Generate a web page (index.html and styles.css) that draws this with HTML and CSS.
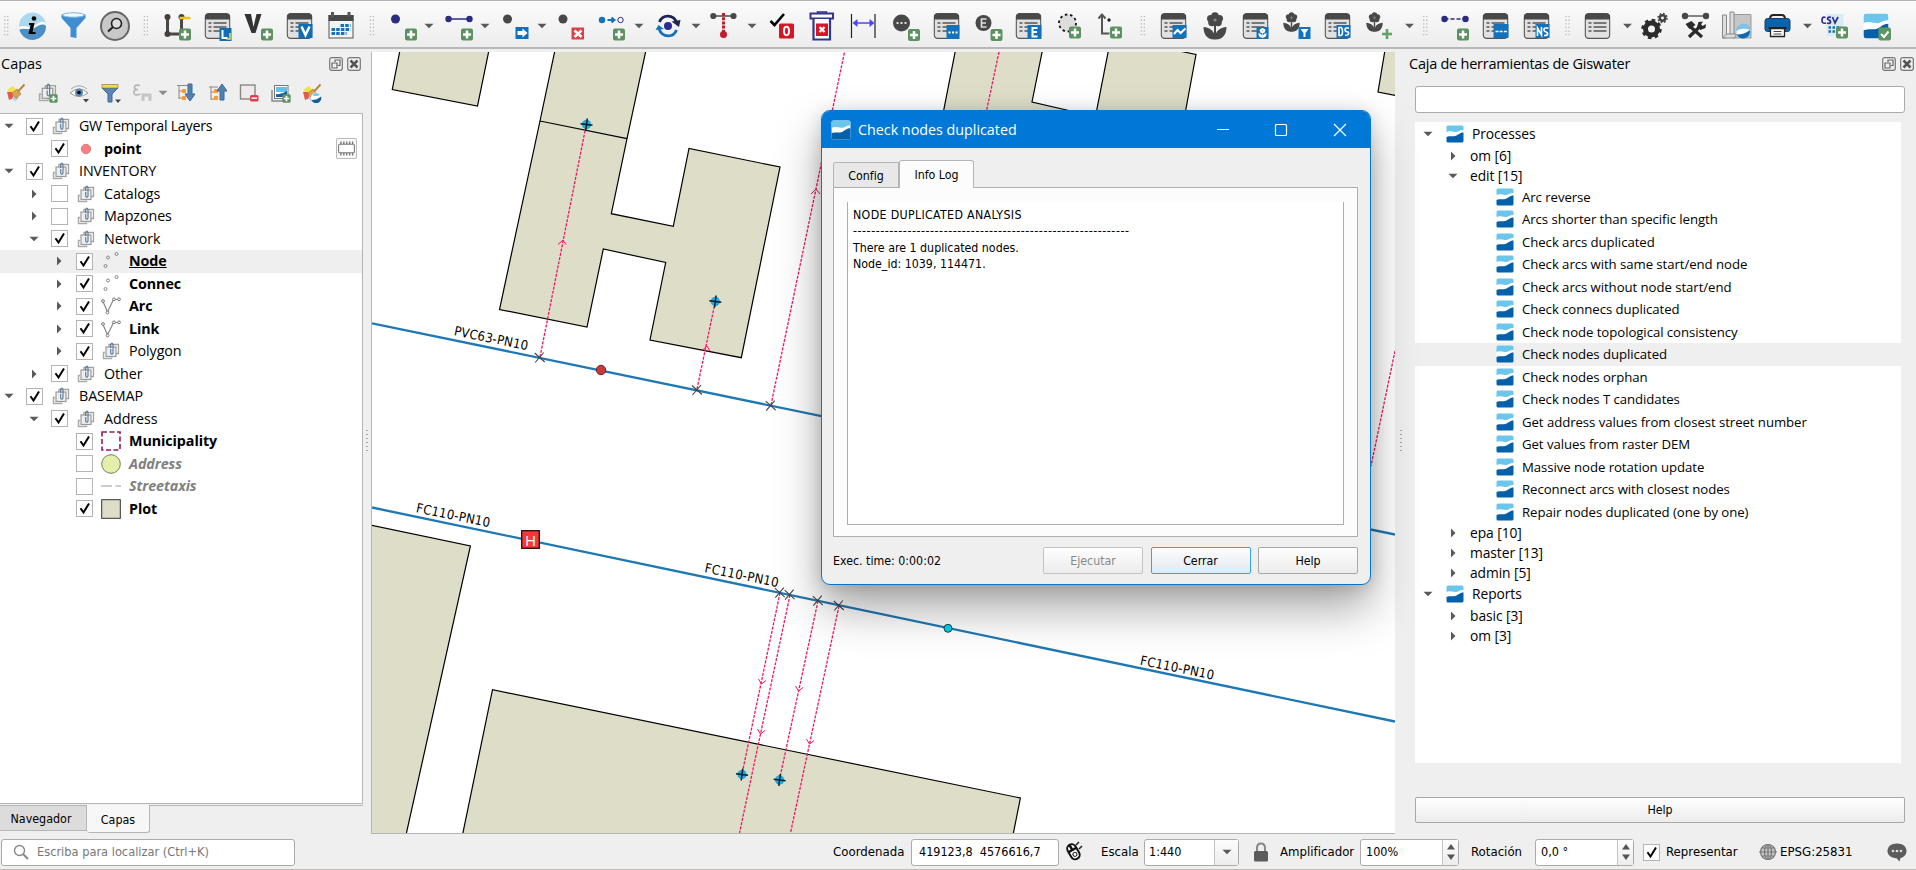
FILE: index.html
```html
<!DOCTYPE html>
<html lang="es">
<head>
<meta charset="utf-8">
<title>Giswater</title>
<link rel="stylesheet" href="styles.css">
</head>
<body>
<svg class="defs" aria-hidden="true">
  <defs>
    <symbol id="gw" viewBox="0 0 18 18"><rect x=".5" y=".5" width="17" height="17" rx="1.5" fill="#fff"/><path d="M.5 2Q.5.5 2 .5H16Q17.500.5 17.500 2V5C14 4.500 12 7.500 9 7 6 6.500 3 5.500.5 7Z" fill="#6cc5ea"/><path d="M.5 12C4 10.500 7 12 10.500 10.500 13 9.500 14 7.500 17.500 7.500V16Q17.500 17.500 16 17.500H2Q.5 17.500.5 16Z" fill="#0460a9"/></symbol>
    <symbol id="down" viewBox="0 0 10 10"><path d="M.5 2.700H9.500L5 7.300Z" fill="#5a5a5a"/></symbol>
    <symbol id="right" viewBox="0 0 10 10"><path d="M3 .5V9.500L7.500 5Z" fill="#5a5a5a"/></symbol>
    <symbol id="check" viewBox="0 0 17 17"><path d="M4.500 8.200 7.500 12.500 13 3.500" fill="none" stroke="#000" stroke-width="2"/></symbol>
    <symbol id="group" viewBox="0 0 18 18"><path d="M3 10.500H1.500V16.500H9.500V15.500" fill="none" stroke="#aaa" stroke-width="1.500"/><path d="M7 5V2.500H16.500V11.500H14" fill="none" stroke="#a2a2a0" stroke-width="1.300"/><rect x="4" y="5" width="10" height="9.500" fill="#eceff1" stroke="#9b9b96" stroke-width="1.200"/><path d="M8.700 6V2.500Q9.800-.5 11 2.500V11Q9.800 13.500 8.700 11V7" fill="none" stroke="#56769a" stroke-width="1.100"/></symbol>
    <symbol id="points" viewBox="0 0 18 18"><g fill="none" stroke="#888"><circle cx="3.500" cy="14" r="1.500"/><circle cx="6" cy="5.500" r="1.500"/><circle cx="14.500" cy="2" r="1.500"/></g></symbol>
    <symbol id="vline" viewBox="0 0 20 18"><path d="M2 4.500 6.500 15 12.500 2.500H18" fill="none" stroke="#888" stroke-width="1.200"/><g fill="#fff" stroke="#777"><circle cx="2" cy="4" r="1.400"/><circle cx="6.500" cy="15.500" r="1.400"/><circle cx="13" cy="2.300" r="1.400"/><circle cx="18" cy="2.300" r="1.400"/></g></symbol>
    <symbol id="plus" viewBox="0 0 13 13"><rect x=".5" y=".5" width="12" height="12" rx="2" fill="#5c9260"/><path d="M6.500 2.500V10.500M2.500 6.500H10.500" stroke="#fff" stroke-width="2.500"/></symbol>
    <symbol id="table" viewBox="0 0 26 26"><rect x=".7" y=".7" width="24.600" height="24.600" rx="3.500" fill="#e1e1e1" stroke="#555" stroke-width="1.300"/><path d="M.5 6.500V4Q.5.5 4 .5H22Q25.500.5 25.500 4V6.500Z" fill="#484848"/><path d="M4 10H7M9 10H22M4 14H7M9 14H22M4 18H7M9 18H22" stroke="#555" stroke-width="1.700"/></symbol>
    <symbol id="flower" viewBox="0 0 24 28"><circle cx="7.500" cy="6.500" r="3.500"/><circle cx="16.500" cy="6.500" r="3.500"/><circle cx="12" cy="4" r="3.800"/><circle cx="9" cy="10.500" r="3.800"/><circle cx="15" cy="10.500" r="3.800"/><circle cx="12" cy="8" r="5"/><circle cx="12" cy="8" r="1.600" fill="#888"/><path d="M11 13H13V27H11Z"/><path d="M12 27.500C4 28 .5 22 .5 15 7 15.500 11.300 19 12 25 12.700 19 17 15.500 23.500 15 23.500 22 20 28 12 27.500Z"/></symbol>
    <symbol id="float" viewBox="0 0 14 14"><rect x=".7" y=".7" width="12.600" height="12.600" rx="2" fill="none" stroke="#777" stroke-width="1.200"/><path d="M3 6H8V11H3ZM6 5V3H11V8.500H9" fill="none" stroke="#666" stroke-width="1.200"/></symbol>
    <symbol id="shut" viewBox="0 0 14 14"><rect x=".7" y=".7" width="12.600" height="12.600" rx="2" fill="none" stroke="#777" stroke-width="1.200"/><path d="M3.500 3.500 10.500 10.500M10.500 3.500 3.500 10.500" stroke="#555" stroke-width="2.500"/></symbol>
    <symbol id="grip" viewBox="0 0 6 22"><path d="M1.500 1V22M4.500 1V22" stroke="#b9b9b9" stroke-width="1.300" stroke-dasharray="1.300 2.300"/></symbol>
    <symbol id="cross" viewBox="-6 -6 12 12"><path d="M-5-4.500 5 4.500M-4.500 5 4-5" stroke="#444" stroke-width="1.100"/></symbol>
    <symbol id="connec" viewBox="-8 -8 16 16"><circle r="4.700" fill="#26a6db"/><path d="M-6-.8 6 .8M.8-6-.8 6" stroke="#06202c" stroke-width="1.500"/></symbol>
    <symbol id="brush" viewBox="0 0 20 20"><path d="M1 7 7 3 11 8 5 11Z" fill="#f7df4c"/><path d="M1 9 6 9 8 15 3 17Z" fill="#e8574c"/><path d="M6 15 9 12 13 15 9 18.500Z" fill="#bcd0e4"/><path d="M6 10 11 6 15 11 10 15.500Z" fill="#d6a458" stroke="#a8732f" stroke-width=".6"/><path d="M12 8.500 18.500 1.500" stroke="#c0843a" stroke-width="2"/></symbol>
  </defs>
</svg>

<header class="toolbar">
  <svg class="grip"><use href="#grip"/></svg>
  <svg class="tool" viewBox="0 0 32 32"><circle cx="16" cy="16" r="13.500" fill="#a9d8ef"/><path d="M2.600 17C8 14 12 19 17 16 22 13 25 10 29 13L29.500 19H3Z" fill="#fff"/><path d="M3 20C8 17 12 21 18 18 23 15 26 13 29.500 16A13.500 13.500 0 0 1 3 20Z" fill="#4d8fc2"/><circle cx="17.500" cy="8.500" r="2.300"/><path d="M12.500 13H18L16 22H19V24H12L14 15H12.500Z"/></svg>
  <svg class="tool" viewBox="0 0 32 32"><path d="M4 4.500Q16 1 28 4.500V8L19 18V28L13 27V18L4 8Z" fill="#3f8ed0"/><ellipse cx="16" cy="5" rx="11" ry="2.200" fill="#f4f8fb" stroke="#88b8dc"/></svg>
  <svg class="tool" viewBox="0 0 32 32"><circle cx="16.500" cy="16" r="14" fill="#c9c9c9" stroke="#666" stroke-width="2"/><circle cx="18" cy="13.500" r="5" fill="#ddd" stroke="#222" stroke-width="1.600"/><path d="M14.500 17 9.500 21.500" stroke="#222" stroke-width="2"/></svg>
  <svg class="grip grip--wide"><use href="#grip"/></svg>
  <svg class="tool" viewBox="0 0 32 32"><path d="M7 7V24H21V7" fill="none" stroke="#4b4744" stroke-width="3"/><g fill="#45413e"><circle cx="7" cy="7" r="3"/><circle cx="7" cy="24" r="3"/><circle cx="21" cy="7" r="3"/></g><path d="M19 8H30" stroke="#f1c40f" stroke-width="2.500"/><use href="#plus" x="18" y="18" width="13" height="13"/></svg>
  <svg class="tool" viewBox="0 0 32 32"><use href="#table" x="3" y="3" width="26" height="26"/><rect x="18" y="18" width="12" height="13" fill="#0f6db5"/><path d="M21 20V28H26" fill="none" stroke="#fff" stroke-width="2"/><path d="M28.500 23V29H25" fill="none" stroke="#f0df4a" stroke-width="1.500"/></svg>
  <svg class="tool" viewBox="0 0 32 32"><path d="M2 4H8.500L11 17 14 4H19L13 23H9Z" fill="#333"/><use href="#plus" x="18" y="18" width="13" height="13"/></svg>
  <svg class="tool" viewBox="0 0 32 32"><use href="#table" x="3" y="3" width="26" height="26"/><rect x="15" y="14" width="14" height="14" fill="#0f6db5"/><path d="M18 16.500 22 25 26 16.500" fill="none" stroke="#fff" stroke-width="2.500"/></svg>
  <svg class="tool" viewBox="0 0 32 32"><rect x="4.500" y="5.500" width="24" height="22.500" fill="#f4f4f4" stroke="#555"/><path d="M4 5H29V11H4Z" fill="#484848"/><path d="M8 2V7M24.500 2V7" stroke="#555" stroke-width="3"/><path d="M16 15.500H26M7 19.500H26M7 23.500H22" stroke="#1472ba" stroke-width="3.200" stroke-dasharray="3.500 1.200"/></svg>
  <svg class="grip grip--wide"><use href="#grip"/></svg>
  <svg class="tool" viewBox="0 0 32 32"><circle cx="8" cy="9" r="4.500" fill="#2b2b80"/><use href="#plus" x="17" y="18" width="13" height="13"/></svg><svg class="caret"><use href="#down"/></svg>
  <svg class="tool" viewBox="0 0 32 32"><path d="M5 9H26" stroke="#2b2b80" stroke-width="1.500"/><circle cx="5" cy="9" r="3.200" fill="#2b2b80"/><circle cx="26" cy="9" r="3.200" fill="#2b2b80"/><use href="#plus" x="17" y="18" width="13" height="13"/></svg><svg class="caret"><use href="#down"/></svg>
  <svg class="tool" viewBox="0 0 32 32"><circle cx="7" cy="9" r="4.500" fill="#484848"/><rect x="15" y="17" width="13" height="12" fill="#146fb9"/><path d="M17 21H22V18.500L27 23 22 27.500V25H17Z" fill="#fff"/></svg><svg class="caret"><use href="#down"/></svg>
  <svg class="tool" viewBox="0 0 32 32"><circle cx="6.500" cy="9" r="4.500" fill="#484848"/><rect x="15" y="17.500" width="12.500" height="12" fill="#dc4046"/><path d="M18 20.500 25 27M25 20.500 18 27" stroke="#fff" stroke-width="2.500"/></svg>
  <svg class="tool" viewBox="0 0 32 32"><circle cx="4.500" cy="10" r="3.200" fill="#1472ba"/><path d="M10 10H16M14 7.500 17 10 14 12.500" fill="none" stroke="#1472ba" stroke-width="2"/><circle cx="23" cy="10" r="2.700" fill="#fff" stroke="#2b2b80"/><use href="#plus" x="15" y="18" width="13" height="13"/></svg><svg class="caret"><use href="#down"/></svg>
  <svg class="tool" viewBox="0 0 32 32"><g fill="none" stroke-width="2.800"><path d="M5 12C8 4 19 4 22.500 13" stroke="#1f2450"/><path d="M4.500 19C8 28 19 28 22 20" stroke="#1472ba"/></g><path d="M17 11.500 26 10 24.500 17Z" fill="#1f2450"/><path d="M1 20 4 15 9.500 19Z" fill="#1472ba"/><circle cx="13.500" cy="16" r="4" fill="#2b2b90"/></svg><svg class="caret"><use href="#down"/></svg>
  <svg class="tool" viewBox="0 0 32 32"><path d="M2 6H24" stroke="#484848" stroke-width="1.500"/><circle cx="2.800" cy="6" r="3.100" fill="#484848"/><circle cx="23" cy="6" r="3.100" fill="#484848"/><path d="M13 3V23" stroke="#c41a2d" stroke-width="3" stroke-dasharray="3 1.200"/><circle cx="13" cy="24.500" r="3.500" fill="#c41a2d"/></svg><svg class="caret"><use href="#down"/></svg>
  <svg class="tool" viewBox="0 0 32 32"><path d="M3 11 7 15 16.500 4" fill="none" stroke="#000" stroke-width="2.600"/><rect x="11.500" y="13.500" width="15" height="15" rx="1.500" fill="#d71524"/><ellipse cx="19" cy="21" rx="2.500" ry="4.200" fill="none" stroke="#fff" stroke-width="2"/></svg>
  <svg class="tool" viewBox="0 0 32 32"><path d="M9 3.500V2H18V3.500" fill="none" stroke="#2b2b80" stroke-width="1.500"/><path d="M2 3.500H24.500V8.500H2Z" fill="#fff" stroke="#35358f" stroke-width="2"/><path d="M5 9V29.500H21.500V9" fill="#fff" stroke="#35358f" stroke-width="2.200"/><rect x="7.500" y="13.500" width="12" height="12.500" fill="#d71524"/><path d="M11 17 16 22M16 17 11 22" stroke="#fff" stroke-width="2.200"/></svg>
  <svg class="tool" viewBox="0 0 32 32"><path d="M2 4V28M25.500 4V28" stroke="#222" stroke-width="1.200"/><path d="M5 13H23" stroke="#4747ff" stroke-width="1.500"/><path d="M3 13 8 9V17ZM25 13 20 9V17Z" fill="#4747ff"/></svg>
  <svg class="tool" viewBox="0 0 32 32"><circle cx="11" cy="13" r="8.500" fill="#484848"/><path d="M6 13H16.500" stroke="#ddd" stroke-width="2" stroke-dasharray="2 2"/><use href="#plus" x="17" y="18.500" width="13" height="13"/></svg>
  <svg class="tool" viewBox="0 0 32 32"><use href="#table" x="2" y="3" width="26" height="26"/><rect x="15" y="15" width="13" height="14" fill="#1472ba"/><path d="M17 22.500H27" stroke="#fff" stroke-width="2" stroke-dasharray="2 1.500"/></svg>
  <svg class="tool" viewBox="0 0 32 32"><circle cx="11" cy="13" r="8" fill="#484848"/><path d="M14 9H9V17H14M9 13H13.500" fill="none" stroke="#ddd" stroke-width="1.700"/><use href="#plus" x="17.500" y="18.500" width="13" height="13"/></svg>
  <svg class="tool" viewBox="0 0 32 32"><use href="#table" x="2" y="3" width="26" height="26"/><rect x="14" y="15" width="14" height="14" fill="#1472ba"/><path d="M24 18H19V26.500H24M19 22H23.500" fill="none" stroke="#fff" stroke-width="2"/></svg>
  <svg class="tool" viewBox="0 0 32 32"><circle cx="13" cy="13" r="8.500" fill="#ddd" stroke="#111" stroke-width="1.800" stroke-dasharray="2.500 2.800"/><use href="#plus" x="14" y="16" width="13" height="13"/></svg>
  <svg class="tool" viewBox="0 0 32 32"><path d="M6.500 5V23.500H14M3 8.500 6.500 4.500 10 8.500" fill="none" stroke="#555" stroke-width="2"/><circle cx="13.500" cy="10" r="1.700" fill="#222"/><use href="#plus" x="14" y="16" width="13" height="13"/></svg>
  <svg class="grip grip--tight"><use href="#grip"/></svg>
  <svg class="tool" viewBox="0 0 32 32"><use href="#table" x="2" y="3" width="26" height="26"/><rect x="14" y="15" width="14" height="13" fill="#1472ba"/><path d="M15.500 24 19 20 22 23 27 18.500" fill="none" stroke="#fff" stroke-width="2"/></svg>
  <svg class="tool" viewBox="0 0 32 32" fill="#484848"><use href="#flower" x="3" y="2" width="25" height="28"/></svg>
  <svg class="tool" viewBox="0 0 32 32"><use href="#table" x="2" y="3" width="26" height="26"/><rect x="16" y="17" width="12" height="12" fill="#1472ba"/><use href="#flower" x="17" y="18" width="10" height="10" fill="#fff"/></svg>
  <svg class="tool" viewBox="0 0 32 32" fill="#484848"><use href="#flower" x="0" y="2" width="20" height="20"/><rect x="17" y="17" width="12" height="12" fill="#1472ba"/><path d="M19 19H27L24 23V27H22V23Z" fill="#fff"/></svg>
  <svg class="tool" viewBox="0 0 32 32"><use href="#table" x="2" y="3" width="26" height="26"/><rect x="14" y="15" width="14" height="13" fill="#1472ba"/><path d="M16.500 17.500V25.500H18Q20 25.500 20 21.500 20 17.500 18 17.500ZM26.500 18H23.500Q22.500 18 22.500 20 22.500 21.500 24.500 21.700 26.500 22 26 24 25.800 25.300 22.500 25.300" fill="none" stroke="#fff" stroke-width="1.600"/></svg>
  <svg class="tool" viewBox="0 0 32 32" fill="#484848"><use href="#flower" x="1" y="2" width="20" height="20"/><path d="M23.500 19V29M18.500 24H28.500" stroke="#5fa367" stroke-width="2.600"/></svg><svg class="caret caret--wide"><use href="#down"/></svg>
  <svg class="grip grip--short"><use href="#grip"/></svg>
  <svg class="tool" viewBox="0 0 32 32"><path d="M5 9H26" stroke="#2b2b80" stroke-width="1.500" stroke-dasharray="4 2"/><circle cx="5" cy="9" r="3.200" fill="#2b2b80"/><circle cx="26" cy="9" r="3.200" fill="#2b2b80"/><use href="#plus" x="17" y="18" width="13" height="13"/></svg>
  <svg class="tool" viewBox="0 0 32 32"><use href="#table" x="2" y="3" width="26" height="26"/><rect x="13" y="14" width="15" height="14" fill="#1472ba"/><path d="M15 21.500H27" stroke="#fff" stroke-width="1.500" stroke-dasharray="3 1.200"/></svg>
  <svg class="tool" viewBox="0 0 32 32"><use href="#table" x="2" y="3" width="26" height="26"/><rect x="14" y="14" width="14" height="14" fill="#1472ba"/><path d="M16 26V18L20 25V17M27 18H24Q22.500 18 22.500 20 22.500 21.500 24.500 22 26.500 22.500 26 24.500 25.800 25.500 22.500 25.500" fill="none" stroke="#fff" stroke-width="1.600"/></svg>
  <svg class="grip grip--mid"><use href="#grip"/></svg>
  <svg class="tool" viewBox="0 0 32 32"><use href="#table" x="3" y="3" width="26" height="26"/></svg><svg class="caret caret--wide"><use href="#down"/></svg>
  <svg class="tool" viewBox="0 0 32 32"><circle cx="13" cy="19" r="6" fill="none" stroke="#2c2c2c" stroke-width="5"/><circle cx="13" cy="19" r="9" fill="none" stroke="#2c2c2c" stroke-width="2.500" stroke-dasharray="3.500 3.560"/><circle cx="24" cy="8" r="2.700" fill="none" stroke="#444" stroke-width="2.500"/><circle cx="24" cy="8" r="4.500" fill="none" stroke="#444" stroke-width="1.500" stroke-dasharray="1.700 1.830"/></svg>
  <svg class="tool" viewBox="0 0 32 32"><path d="M5 6H27" stroke="#484848" stroke-width="1.300"/><circle cx="5.500" cy="6" r="3.200" fill="#484848"/><circle cx="26.500" cy="6" r="3.200" fill="#484848"/><path d="M9 15 22.500 27M22 15 9.500 27" stroke="#2a2a2a" stroke-width="3.200"/><path d="M6 14 12 11 16 15 10 19Z" fill="#2a2a2a"/><path d="M19 12 17.500 17 21 20 26 18 26.500 14 23 16 21.500 14.500 23.500 11.500Z" fill="#2a2a2a"/></svg>
  <svg class="tool" viewBox="0 0 32 32"><path d="M12 4.500H30.500V28H12Z" fill="#c6c6c6" stroke="#999"/><path d="M2 5H6V28H2ZM9.500 2H13.500V25H9.500Z" fill="#ddd" stroke="#888"/><path d="M2 28H14L16 24H6Z" fill="#ddd" stroke="#888"/><circle cx="23" cy="21" r="7.500" fill="#7fc2e8"/><path d="M16 21Q21 17 30 20 27 25 16 24Z" fill="#fff"/><path d="M16.500 25Q25 24 29.500 20 30 27 23 28.500 19 28.500 16.500 25Z" fill="#1467ac"/></svg>
  <svg class="tool" viewBox="0 0 32 32"><path d="M8.500 9Q8.500 5 12 5H20Q23.500 5 23.500 9" fill="#eee" stroke="#222" stroke-width="2"/><rect x="3.500" y="8.500" width="25" height="13" rx="2.500" fill="#0b63ac" stroke="#154069"/><path d="M9 18.500H23V26.500H9Z" fill="#fff" stroke="#222" stroke-width="1.300"/><path d="M7 18H25" stroke="#222" stroke-width="2"/><path d="M12 21.500H20M12 24H20" stroke="#444"/></svg><svg class="caret caret--wide"><use href="#down"/></svg>
  <svg class="tool" viewBox="0 0 32 32"><rect x="7" y="4" width="17" height="22" fill="#d9ebf5"/><path d="M6 7.500Q2.500 6 2.500 10.500 2.500 14 6.500 13M11.500 7.500Q8 6.500 8 9 11.500 10.500 11 12.500 10 14 7.500 13M13 7 15.500 13 18.500 7" fill="none" stroke="#2b2b90" stroke-width="1.700"/><path d="M9 17.500H20M9 21.500H17" stroke="#1472ba" stroke-width="2.500" stroke-dasharray="2.500 1.500"/><use href="#plus" x="16" y="16" width="13" height="13"/></svg>
  <svg class="tool" viewBox="0 0 32 32"><use href="#gw" x="2.500" y="3" width="26" height="26"/><rect x="18" y="17.500" width="12.500" height="13" rx="2" fill="#5d9660"/><path d="M20.500 24 23.500 27 28 21.500" fill="none" stroke="#fff" stroke-width="2"/></svg>
</header>

<main class="workspace">
  <aside class="layers">
    <div class="dock-title"><span class="t-capas">Capas</span><svg><use href="#float"/></svg><svg><use href="#shut"/></svg></div>
    <div class="layer-tools">
      <svg viewBox="0 0 20 20"><use href="#brush"/></svg>
      <svg viewBox="0 0 20 20"><use href="#group" width="19" height="19"/><use href="#plus" x="11" y="11" width="9" height="9"/></svg>
      <svg viewBox="0 0 20 20"><path d="M1 10Q10 2 19 10 10 17 1 10Z" fill="#fff" stroke="#999"/><circle cx="10" cy="9.500" r="4" fill="#5c88b4"/><circle cx="10" cy="9.500" r="1.800"/><path d="M2 6Q10-.5 18 6" fill="none" stroke="#aaa"/><path d="M14 16H20L17 19.500Z" fill="#444"/></svg>
      <svg viewBox="0 0 20 20"><path d="M1 5H17L11 11V19H7V11Z" fill="#5a85b4" stroke="#3d6796"/><rect x="1" y="1.500" width="16" height="3.500" fill="#f5da45" stroke="#8b8145" stroke-width=".7"/><path d="M14 16.500H20L17 20Z" fill="#444"/></svg>
      <svg viewBox="0 0 20 20"><path d="M8 2.500Q2 1 2.500 5 3 6.500 6 6.500 1 7 2 10.500 3 13 8.500 11" fill="none" stroke="#b5b5b5" stroke-width="1.700"/><path d="M11 18V12H18V18" fill="none" stroke="#c5c5c5" stroke-width="3"/></svg>
      <svg class="mini"><use href="#down" opacity=".65"/></svg>
      <svg viewBox="0 0 20 20"><path d="M1 2.500H12M3 2.500V16M3 8H7M3 15H7" fill="none" stroke="#888"/><rect x="6" y="6" width="4" height="4" fill="#ff9b2c"/><rect x="6" y="13" width="4" height="4" fill="#ff9b2c"/><path d="M12 1H16V11H19L14 18 9 11H12Z" fill="#5083b4" stroke="#3b6795"/></svg>
      <svg viewBox="0 0 20 20"><path d="M1 4H10M3 4V17M3 9H7M3 16H7" fill="none" stroke="#888"/><rect x="6" y="6" width="4" height="4" fill="#ff9b2c"/><rect x="6" y="13" width="4" height="4" fill="#ff9b2c"/><path d="M12 17H16V8H19L14 1 9 8H12Z" fill="#5083b4" stroke="#3b6795"/></svg>
      <svg viewBox="0 0 20 20"><rect x="1.500" y="2" width="14.500" height="14" fill="#ececec" stroke="#8a8a84" stroke-width="1.400"/><rect x="11" y="12" width="8.500" height="6.500" rx="1.500" fill="#e43f49"/><path d="M12.500 15.200H18" stroke="#fff" stroke-width="1.500"/></svg>
      <svg viewBox="0 0 20 20"><path d="M1 7V18H13" fill="none" stroke="#888" stroke-width="1.400"/><rect x="3.500" y="2.500" width="13.500" height="13" fill="#fff" stroke="#777"/><rect x="5" y="4" width="11" height="5" fill="#68c0e8"/><path d="M5 11Q10 12 16 8V14H5Z" fill="#155f9f"/><use href="#plus" x="11" y="11" width="9" height="9"/></svg>
      <svg viewBox="0 0 20 20"><use href="#brush"/><circle cx="14" cy="14.500" r="5" fill="#fff"/><path d="M9.500 17Q15 17 19 13.500A5 5 0 0 1 9.500 17Z" fill="#14609f"/><path d="M10 12A5 5 0 0 1 18 12Q14 14 10 12Z" fill="#7cc4e8"/></svg>
    </div>
    <div class="tree layer-tree">
      <div class="row l0"><svg class="arr"><use href="#down"/></svg><i class="box"><svg><use href="#check"/></svg></i><svg class="ico"><use href="#group"/></svg><span class="t-gw">GW Temporal Layers</span></div>
      <div class="row l1"><i class="arr"></i><i class="box"><svg><use href="#check"/></svg></i><svg class="ico" viewBox="0 0 18 18"><circle cx="9" cy="9" r="4.700" fill="#ff7f7f" stroke="#c47070" stroke-width=".8"/></svg><b>point</b><svg class="memory" viewBox="0 0 20 20"><rect x=".5" y=".5" width="19" height="19" rx="1.500" fill="#fafafa" stroke="#bbb"/><rect x="2.500" y="6" width="15" height="8" rx="1" fill="#fff" stroke="#777"/><path d="M4 4.500H17M4 15.500H17" stroke="#777" stroke-width="2.500" stroke-dasharray="1.300 1.500"/></svg></div>
      <div class="row l0"><svg class="arr"><use href="#down"/></svg><i class="box"><svg><use href="#check"/></svg></i><svg class="ico"><use href="#group"/></svg><span>INVENTORY</span></div>
      <div class="row l1"><svg class="arr"><use href="#right"/></svg><i class="box"></i><svg class="ico"><use href="#group"/></svg><span>Catalogs</span></div>
      <div class="row l1"><svg class="arr"><use href="#right"/></svg><i class="box"></i><svg class="ico"><use href="#group"/></svg><span>Mapzones</span></div>
      <div class="row l1"><svg class="arr"><use href="#down"/></svg><i class="box"><svg><use href="#check"/></svg></i><svg class="ico"><use href="#group"/></svg><span>Network</span></div>
      <div class="row l2 current"><svg class="arr"><use href="#right"/></svg><i class="box"><svg><use href="#check"/></svg></i><svg class="ico"><use href="#points"/></svg><b><u>Node</u></b></div>
      <div class="row l2"><svg class="arr"><use href="#right"/></svg><i class="box"><svg><use href="#check"/></svg></i><svg class="ico"><use href="#points"/></svg><b>Connec</b></div>
      <div class="row l2"><svg class="arr"><use href="#right"/></svg><i class="box"><svg><use href="#check"/></svg></i><svg class="ico big"><use href="#vline"/></svg><b>Arc</b></div>
      <div class="row l2"><svg class="arr"><use href="#right"/></svg><i class="box"><svg><use href="#check"/></svg></i><svg class="ico big"><use href="#vline"/></svg><b>Link</b></div>
      <div class="row l2"><svg class="arr"><use href="#right"/></svg><i class="box"><svg><use href="#check"/></svg></i><svg class="ico"><use href="#group"/></svg><span>Polygon</span></div>
      <div class="row l1"><svg class="arr"><use href="#right"/></svg><i class="box"><svg><use href="#check"/></svg></i><svg class="ico"><use href="#group"/></svg><span>Other</span></div>
      <div class="row l0"><svg class="arr"><use href="#down"/></svg><i class="box"><svg><use href="#check"/></svg></i><svg class="ico"><use href="#group"/></svg><span>BASEMAP</span></div>
      <div class="row l1"><svg class="arr"><use href="#down"/></svg><i class="box"><svg><use href="#check"/></svg></i><svg class="ico"><use href="#group"/></svg><span>Address</span></div>
      <div class="row l2"><i class="arr"></i><i class="box"><svg><use href="#check"/></svg></i><svg class="ico big" viewBox="0 0 20 20"><rect x="1" y="1" width="18" height="18" fill="none" stroke="#8e1a5e" stroke-width="1.600" stroke-dasharray="5 2.500"/></svg><b>Municipality</b></div>
      <div class="row l2 off"><i class="arr"></i><i class="box"></i><svg class="ico big" viewBox="0 0 20 20"><circle cx="10" cy="10" r="9.300" fill="#e5eeab" stroke="#777b60"/></svg><b>Address</b></div>
      <div class="row l2 off"><i class="arr"></i><i class="box"></i><svg class="ico big" viewBox="0 0 20 20"><path d="M0 10H20" stroke="#ccc" stroke-width="2" stroke-dasharray="11 3.500"/></svg><b>Streetaxis</b></div>
      <div class="row l2"><i class="arr"></i><i class="box"><svg><use href="#check"/></svg></i><svg class="ico big" viewBox="0 0 20 20"><rect x=".7" y=".7" width="18.600" height="18.600" fill="#dedec8" stroke="#333"/></svg><b>Plot</b></div>
    </div>
    <div class="dock-tabs"><span class="dock-tab">Navegador</span><span class="dock-tab dock-tab--on">Capas</span></div>
  </aside>
  <div class="splitter"><i></i></div>

  <section class="map">
    <svg class="canvas" viewBox="372 52 1023 781">
      <g class="plot">
        <path d="M400 50 392.300 89.500 477.500 106 489 50"/>
        <path d="M555 50 540 121 499.500 309.500 587 327 603.300 249 665.700 262.500 650 340 741.300 357.700 780 167 689 148.500 673.300 226.300 611.300 213.700 627 138.700 646 50M540 121 627 138.700"/>
        <path d="M955.500 50 943 114H1084L1032 102 1042.500 50"/>
        <path d="M1108.500 50 1096 114H1185L1196 54.500 1170 49"/>
        <path d="M1385 50 1378 92 1400 96.500V50"/>
        <path d="M370 525 470.400 546 406 835H370Z"/>
        <path d="M462.500 835 492.500 689.700 1020.400 798 1013 835"/>
      </g>
      <g class="pipe"><path d="M372 323.300 1395 534.500"/><path d="M372 507.500 1395 721.500"/></g>
      <g class="link"><path d="M540 357 586 126"/><path d="M697 389 715 303"/><path d="M771 405 844.500 52"/><path d="M999 52 985 118"/><path d="M1395 351 1371 466"/><path d="M780 593 742 774"/><path d="M790 595 739.500 833"/><path d="M818 601 779.600 779"/><path d="M839 606 790.500 833"/></g>
      <g class="tick"><path d="M558 244.500 563 240 566 244.500"/><path d="M702 350.500 707 346 710 351"/><path d="M811 194 816 189 820 194"/><path d="M758.500 679 761.500 684 766 680.500"/><path d="M757.500 729 760.500 734 765 730.500"/><path d="M795.500 686 798.500 691 803 687.500"/><path d="M806.500 739 809.500 744 814 740.500"/></g>
      <use href="#cross" x="533.700" y="351.500" width="12" height="12"/><use href="#cross" x="691" y="384" width="12" height="12"/><use href="#cross" x="764.700" y="399.700" width="12" height="12"/><use href="#cross" x="773.800" y="586.700" width="12" height="12"/><use href="#cross" x="783.600" y="588.700" width="12" height="12"/><use href="#cross" x="811.800" y="594.700" width="12" height="12"/><use href="#cross" x="832.800" y="599.500" width="12" height="12"/>
      <use href="#connec" x="578.500" y="116.500" width="16" height="16"/><use href="#connec" x="707.300" y="293.500" width="16" height="16"/><use href="#connec" x="734" y="766.500" width="16" height="16"/><use href="#connec" x="771.600" y="772" width="16" height="16"/>
      <circle cx="601" cy="370" r="4.700" fill="#c63a3a" stroke="#6e1f24"/>
      <circle cx="948" cy="628.300" r="4" fill="#00d4ee" stroke="#1c4650"/>
      <rect x="521.700" y="530.700" width="17.600" height="17.600" fill="#fb353a" stroke="#2a0d0d" stroke-width="1.300"/>
      <text class="hydrant" x="530.500" y="546" text-anchor="middle">H</text>
      <g class="label"><text transform="translate(453.500 335) rotate(11.700)" textLength="75">PVC63-PN10</text><text transform="translate(415.500 512) rotate(11.700)" textLength="75">FC110-PN10</text><text transform="translate(704 572) rotate(11.700)" textLength="75">FC110-PN10</text><text transform="translate(1139.500 664.500) rotate(11.700)" textLength="75">FC110-PN10</text></g>
    </svg>

    <div class="dialog">
      <div class="titlebar"><svg class="logo"><use href="#gw"/></svg><span>Check nodes duplicated</span>
        <svg class="winbtns" viewBox="0 0 130 14"><g fill="none" stroke="#fff" stroke-width="1.200"><path d="M0 6.500H12"/><rect x="58.500" y="1.500" width="11" height="11" rx="1"/><path d="M117 1 129 13M129 1 117 13"/></g></svg></div>
      <div class="tabs"><span class="tab">Config</span><span class="tab tab--on">Info Log</span></div>
      <div class="pane"><div class="log"><p class="t-head">NODE DUPLICATED ANALYSIS</p><p class="t-dash">-------------------------------------------------------------</p><p>There are 1 duplicated nodes.</p><p>Node_id: 1039, 114471.</p></div></div>
      <div class="footer"><span class="exec">Exec. time: 0:00:02</span><span class="btn btn--off">Ejecutar</span><span class="btn btn--focus">Cerrar</span><span class="btn">Help</span></div>
    </div>
  </section>
  <div class="splitter splitter--right"><i></i></div>

  <aside class="toolbox">
    <div class="dock-title"><span class="t-caja">Caja de herramientas de Giswater</span><svg><use href="#float"/></svg><svg><use href="#shut"/></svg></div>
    <div class="field filter"></div>
    <div class="tree tool-tree">
      <div class="row top"><svg class="arr"><use href="#down"/></svg><svg class="gw"><use href="#gw"/></svg><span>Processes</span></div>
      <div class="row cat"><svg class="arr"><use href="#right"/></svg><span>om [6]</span></div>
      <div class="row cat"><svg class="arr"><use href="#down"/></svg><span>edit [15]</span></div>
      <div class="row item"><svg class="gw"><use href="#gw"/></svg><span>Arc reverse</span></div>
      <div class="row item"><svg class="gw"><use href="#gw"/></svg><span>Arcs shorter than specific length</span></div>
      <div class="row item"><svg class="gw"><use href="#gw"/></svg><span>Check arcs duplicated</span></div>
      <div class="row item"><svg class="gw"><use href="#gw"/></svg><span>Check arcs with same start/end node</span></div>
      <div class="row item"><svg class="gw"><use href="#gw"/></svg><span>Check arcs without node start/end</span></div>
      <div class="row item"><svg class="gw"><use href="#gw"/></svg><span>Check connecs duplicated</span></div>
      <div class="row item"><svg class="gw"><use href="#gw"/></svg><span>Check node topological consistency</span></div>
      <div class="row item current"><svg class="gw"><use href="#gw"/></svg><span>Check nodes duplicated</span></div>
      <div class="row item"><svg class="gw"><use href="#gw"/></svg><span>Check nodes orphan</span></div>
      <div class="row item"><svg class="gw"><use href="#gw"/></svg><span>Check nodes T candidates</span></div>
      <div class="row item"><svg class="gw"><use href="#gw"/></svg><span>Get address values from closest street number</span></div>
      <div class="row item"><svg class="gw"><use href="#gw"/></svg><span>Get values from raster DEM</span></div>
      <div class="row item"><svg class="gw"><use href="#gw"/></svg><span>Massive node rotation update</span></div>
      <div class="row item"><svg class="gw"><use href="#gw"/></svg><span>Reconnect arcs with closest nodes</span></div>
      <div class="row item"><svg class="gw"><use href="#gw"/></svg><span>Repair nodes duplicated (one by one)</span></div>
      <div class="row cat"><svg class="arr"><use href="#right"/></svg><span>epa [10]</span></div>
      <div class="row cat"><svg class="arr"><use href="#right"/></svg><span>master [13]</span></div>
      <div class="row cat"><svg class="arr"><use href="#right"/></svg><span>admin [5]</span></div>
      <div class="row top"><svg class="arr"><use href="#down"/></svg><svg class="gw"><use href="#gw"/></svg><span>Reports</span></div>
      <div class="row cat"><svg class="arr"><use href="#right"/></svg><span>basic [3]</span></div>
      <div class="row cat"><svg class="arr"><use href="#right"/></svg><span>om [3]</span></div>
    </div>
    <span class="btn help">Help</span>
  </aside>
</main>

<footer class="status">
  <div class="field locator"><svg viewBox="0 0 16 16"><circle cx="6.500" cy="6.500" r="5" fill="none" stroke="#888" stroke-width="1.400"/><path d="M10 10 15 15" stroke="#888" stroke-width="2"/></svg><span>Escriba para localizar (Ctrl+K)</span></div>
  <span class="s-coord">Coordenada</span><div class="field f-coord">419123,8&nbsp; 4576616,7</div>
  <svg class="mouse" viewBox="0 0 20 22"><g transform="rotate(-30 9 11)"><rect x="5" y="3" width="9" height="16" rx="4.500" fill="#fff" stroke="#111" stroke-width="2"/><path d="M5 9H14M9.500 3V9" stroke="#111" stroke-width="2.500"/><circle cx="9.500" cy="14" r="2" fill="none" stroke="#222"/></g><path d="M12 4 15 1M15 8 18 5" stroke="#222" stroke-width="1.500"/></svg>
  <span class="s-scale">Escala</span><div class="field f-scale"><span>1:440</span><i><svg><use href="#down"/></svg></i></div>
  <svg class="lock" viewBox="0 0 16 20"><path d="M4 10V6Q4 1.500 8 1.500T12 6V10" fill="none" stroke="#888" stroke-width="2"/><rect x="1" y="9" width="14" height="10.500" rx="1.500" fill="#5b5b5b"/></svg>
  <span class="s-mag">Amplificador</span><div class="field f-spin"><span>100%</span><i><svg viewBox="0 0 10 18"><path d="M1 6.500 5 1 9 6.500ZM1 11.500 5 17 9 11.500Z" fill="#555"/></svg></i></div>
  <span class="s-rot">Rotación</span><div class="field f-spin"><span>0,0 °</span><i><svg viewBox="0 0 10 18"><path d="M1 6.500 5 1 9 6.500ZM1 11.500 5 17 9 11.500Z" fill="#555"/></svg></i></div>
  <i class="box s-box"><svg><use href="#check"/></svg></i><span class="s-rep">Representar</span>
  <svg class="globe" viewBox="0 0 20 18"><g fill="none" stroke="#777" stroke-width="1.200"><circle cx="10" cy="9" r="7.500" fill="#c4c4c4"/><ellipse cx="10" cy="9" rx="3.500" ry="7.500"/><path d="M10 1V17M1 9H19M3.500 5H16.500M3.500 13H16.500"/></g></svg>
  <span class="s-epsg">EPSG:25831</span>
  <svg class="bubble" viewBox="0 0 20 20"><path d="M10 1.500C16 1.500 19.500 4.500 19.500 9 19.500 13 16.500 15.500 13.500 16L12.500 19.500 9.500 16.200C4 16 .5 13 .5 9 .5 4.500 4 1.500 10 1.500Z" fill="#5c5c5c"/><g fill="#ddd"><circle cx="6" cy="9" r="1.300"/><circle cx="10" cy="9" r="1.300"/><circle cx="14" cy="9" r="1.300"/></g></svg>
</footer>
</body>
</html>
```
FILE: styles.css
```css
* { box-sizing: border-box; }
body {
  margin: 0;
  width: 1916px;
  height: 870px;
  overflow: hidden;
  display: flex;
  flex-direction: column;
  background: #efefef;
  color: #000;
  font: 14.3px/20px "Open Sans", "Noto Sans", sans-serif;
  white-space: nowrap;
}
svg { display: block; flex: none; }
i { font-style: normal; flex: none; }
.defs { position: absolute; width: 0; height: 0; }

/* Main toolbar */
.toolbar {
  flex: none;
  display: flex;
  align-items: flex-start;
  height: 49px;
  padding: 9px 0 0 1px;
  border-top: 1px solid #b4b4b4;
  border-bottom: 2px solid #b8b8b8;
  background: linear-gradient(#fbfbfb, #ededed);
}
.tool { width: 41px; height: 32px; }
.grip { width: 10.5px; height: 22px; margin-top: 5px; }
.grip--wide { width: 21.7px; }
.grip--tight { width: 21.7px; }
.grip--short { width: 18.5px; }
.grip--mid { width: 19px; }
.caret { width: 15.5px; height: 10px; margin-top: 11px; padding-right: 5.5px; }
.caret--wide { width: 16.5px; padding: 0 2px 0 4.5px; }

.workspace { flex: none; display: flex; height: 784px; }

/* Docks */
.dock-title { display: flex; align-items: center; height: 28px; }
.dock-title span { flex: 1; font-size: 14.5px; }
.dock-title svg { width: 14px; height: 14px; margin-left: 4px; }
.t-caja { letter-spacing: -.24px; }
.layers { flex: none; width: 363px; display: flex; flex-direction: column; }
.layers .dock-title { padding: 1px 2px 0 1px; }
.layer-tools { display: flex; align-items: center; gap: 11.5px; height: 36px; padding: 0 0 5px 6px; }
.layer-tools svg { width: 20px; height: 20px; }
.layer-tools .mini { width: 10px; height: 10px; margin: 0 -3px 0 -6px; }

.tree { background: #fff; }
.row { display: flex; align-items: center; height: 22.5px; }
.current { background: #efefef; }
.arr { width: 10px; height: 10px; flex: none; }
.layer-tree { flex: none; height: 691px; padding-top: 1px; border: solid #b5b5b5; border-width: 1px 1px 1px 0; letter-spacing: -.08px; }
.layer-tree .row { padding-left: 4px; }
.layer-tree .l1 { padding-left: 29px; }
.layer-tree .l2 { padding-left: 54px; }
.t-gw { letter-spacing: -.27px; }
.box { width: 17px; height: 17px; margin-left: 12px; border: 1px solid #b4b4b4; background: #fff; }
.box svg { width: 17px; height: 17px; margin: -1px; }
.ico { width: 18px; height: 18px; margin: 0 9px 0 9px; }
.ico.big { width: 20px; height: 20px; margin: 0 8px; }
.off { color: #808080; font-style: italic; }
.memory { width: 21px; height: 21px; margin: 0 5px 0 auto; }

.dock-tabs { display: flex; align-items: flex-start; margin-top: 1px; border-top: 1px solid #b5b5b5; font: 12.4px/25px "DejaVu Sans Condensed", "Noto Sans", sans-serif; text-align: center; }
.dock-tab { width: 87px; height: 25px; padding-right: 4px; background: #dcdcdc; border: solid #b5b5b5; border-width: 0 1px 1px 0; }
.dock-tab--on { width: 63px; height: 28px; line-height: 29px; padding-right: 0; margin-top: -1px; background: #f7f7f7; border-radius: 0 0 3px 3px; }

.splitter { flex: none; width: 8px; display: flex; align-items: center; justify-content: center; }
.splitter i { width: 2px; height: 22px; background: repeating-linear-gradient(#aaa 0 1px, transparent 1px 4px); }
.splitter--right { width: 20px; padding-right: 9px; }

/* Map canvas */
.map { position: relative; flex: none; width: 1024px; height: 782px; margin-top: 3px; border: solid #b5b5b5; border-width: 0 0 1px 1px; background: #fff; }
.canvas { width: 1023px; height: 781px; }
.plot path { fill: #dedec8; stroke: #000; stroke-width: 1.2; }
.pipe path { stroke: #1f78b4; stroke-width: 2.3; }
.link path { stroke: #f01668; stroke-width: 1.3; stroke-dasharray: 3 1.3; }
.tick path { fill: none; stroke: #f01668; }
.label { font: 13px "DejaVu Sans Condensed", "Noto Sans", sans-serif; }
.hydrant { font: 15px "Noto Sans", sans-serif; fill: #fff; }

/* Dialog floats above the map */
.dialog {
  position: absolute;
  left: 449px;
  top: 58px;
  width: 550px;
  height: 475px;
  display: flex;
  flex-direction: column;
  overflow: hidden;
  border: 1px solid #0078d7;
  border-radius: 9px;
  background: #efefef;
  box-shadow: 0 24px 45px rgba(0, 0, 0, .34), 0 2px 18px rgba(0, 0, 0, .16);
  font: 12.3px/16px "DejaVu Sans Condensed", "Noto Sans", sans-serif;
}
.titlebar { flex: none; display: flex; align-items: center; height: 37px; padding-left: 9px; background: #0078d7; color: #fff; font: 14.3px/20px "Open Sans", sans-serif; }
.logo { width: 20px; height: 20px; margin-right: 7px; }
.winbtns { width: 130px; height: 14px; margin: 0 23px 0 auto; }
.tabs { flex: none; display: flex; align-items: flex-end; height: 39px; padding-left: 11px; text-align: center; }
.tab { width: 66px; height: 25px; line-height: 26px; border: 1px solid #b5b5b5; border-bottom: 0; border-radius: 3px 0 0; background: #e8e8e8; }
.tab--on { position: relative; z-index: 1; width: 75px; height: 28px; line-height: 29px; margin-bottom: -1px; border-radius: 3px 3px 0 0; background: #fcfcfc; }
.pane { flex: none; height: 350px; margin: 0 12px 0 11px; padding: 14px 13px 12px; border: 1px solid #adadad; background: #fcfcfc; }
.log { height: 323px; padding: 5px 5px; border: 1px solid #adadad; border-top: 0; background: #fff; }
.log p { margin: 0; height: 16.3px; line-height: 16.3px; }
.log .t-head { letter-spacing: .33px; }
.log .t-dash { letter-spacing: .54px; }
.footer { display: flex; align-items: center; gap: 7.5px; padding: 10px 12px 0 11px; }
.exec { flex: 1; }
.btn { width: 100px; height: 27px; line-height: 26px; text-align: center; border: 1px solid #a8a8a8; border-radius: 2px; background: linear-gradient(#fefefe, #ececec); }
.btn--off { color: #888; border-color: #c2c2c2; }
.btn--focus { border-color: #33a1f5; background: linear-gradient(#fcfdfe, #e3e9ef); }

/* Toolbox */
.toolbox { flex: none; width: 501px; display: flex; flex-direction: column; }
.toolbox .dock-title { padding: 1px 2px 0 0; }
.toolbox .dock-title span { margin-left: -6px; }
.field { display: flex; align-items: center; border: 1px solid #ababab; border-radius: 3px; background: #fff; }
.filter { flex: none; width: 490px; height: 27px; margin: 9px 0 0; }
.tool-tree { flex: none; width: 486px; height: 641px; margin-top: 9px; padding-top: 1px; font-size: 13.2px; letter-spacing: -.06px; }
.tool-tree .top { padding-left: 8px; }
.tool-tree .top .gw { margin: 0 8px 0 13px; }
.tool-tree .top span, .tool-tree .cat span { font-size: 13.8px; }
.gw { width: 18px; height: 18px; flex: none; }
.cat { height: 20px; padding-left: 33px; }
.cat span { margin-left: 12px; }
.item { padding-left: 81px; gap: 8px; }
.help { width: 490px; height: 26px; margin-top: 34px; font: 12.3px/25px "DejaVu Sans Condensed", "Noto Sans", sans-serif; }

/* Status bar */
.status { flex: 1; display: flex; align-items: center; padding: 2px 9px 0 1px; border-bottom: 1px solid #c4b8b8; font: 13.1px/16px "DejaVu Sans Condensed", "Noto Sans", sans-serif; }
.status > span { flex: none; }
.status .field { flex: none; height: 27px; font-size: 12.5px; }
.status .locator { width: 294px; padding-left: 11px; gap: 8px; color: #777; font-size: 12.7px; }
.locator svg { width: 16px; height: 16px; }
.s-coord { width: 78px; margin-left: 538px; }
.f-coord { width: 148px; padding-left: 7px; }
.mouse { width: 20px; height: 22px; margin: 0 17px 0 5px; }
.s-scale { width: 43px; }
.f-scale { width: 95px; padding-left: 4px; }
.field i { display: flex; align-items: center; justify-content: center; height: 25px; margin-left: auto; border-left: 1px solid #c4c4c4; background: linear-gradient(#fdfdfd, #ededed); }
.f-scale i { width: 24px; }
.f-scale i svg { width: 10px; height: 10px; }
.lock { width: 16px; height: 20px; margin: 0 11px 0 14px; }
.s-mag { width: 80px; }
.f-spin { width: 99px; padding-left: 5px; }
.f-spin i { width: 16px; }
.f-spin svg { width: 10px; height: 18px; }
.s-rot { width: 64px; margin-left: 12px; }
.s-box { margin-left: 9px; }
.s-rep { width: 92px; margin-left: 6px; }
.globe { width: 20px; height: 18px; margin-right: 2px; }
.bubble { width: 20px; height: 20px; margin-left: auto; }
```
